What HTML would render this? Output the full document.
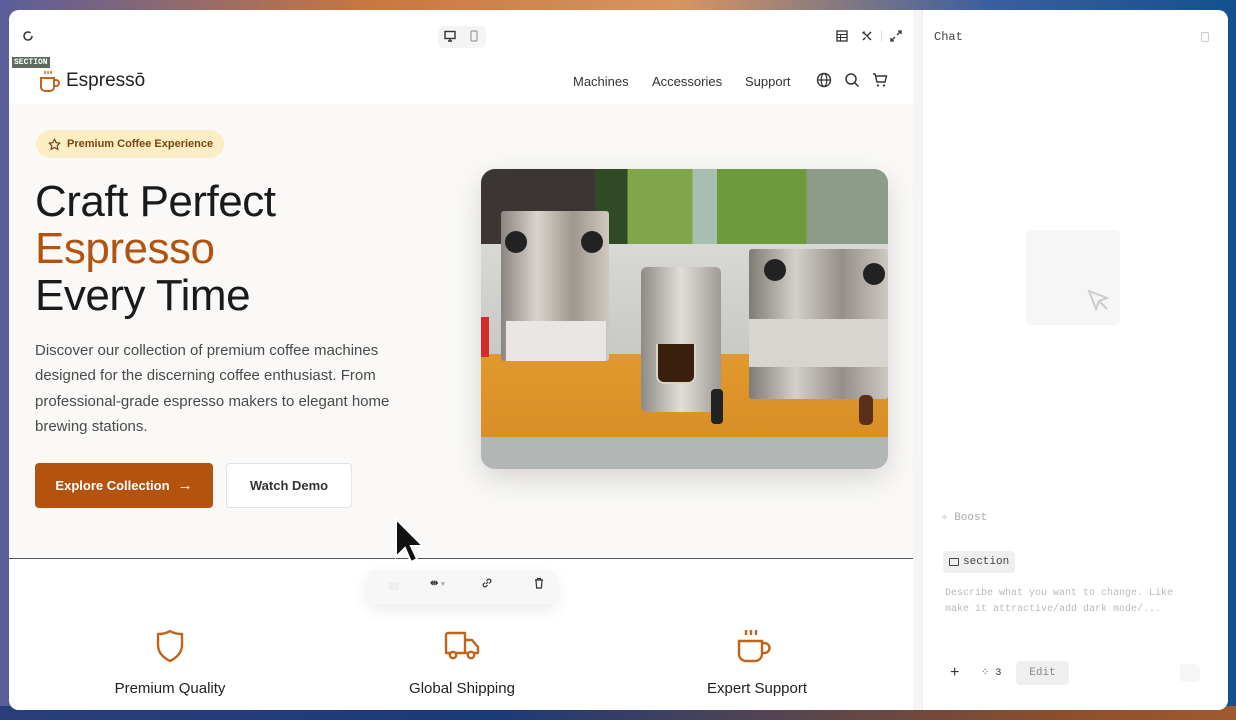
<!DOCTYPE html>
<html><head><meta charset="utf-8">
<style>
*{box-sizing:border-box;margin:0;padding:0}
html,body{width:1236px;height:720px;overflow:hidden}
body{font-family:"Liberation Sans",sans-serif;background:linear-gradient(90deg,#5a5d9a 0%,#c9773f 30%,#d69562 55%,#3a5fa0 80%,#14508f 100%);position:relative}
.bottombg{position:absolute;left:0;right:0;bottom:0;height:14px;background:linear-gradient(90deg,#2a3e7a 0%,#1c3a78 40%,#8a4e2c 85%,#a05a30 100%)}
.win{position:absolute;left:9px;top:10px;width:1219px;height:700px;background:#f6f5f3;border-radius:10px;overflow:hidden}
.left{position:absolute;left:0;top:0;width:904px;height:700px;background:#fff}
.right{position:absolute;left:913px;top:0;width:306px;height:700px;background:#fff;border-left:1px solid #eee}
.ic{position:absolute}
.nav a{position:absolute;top:64px;font-size:13px;color:#333}
.hero{position:absolute;left:0;top:94px;width:904px;height:454px;background:#faf9f7}
h1{position:absolute;left:26px;top:168px;font-weight:400;font-size:44px;line-height:47px;color:#1a1a1a;letter-spacing:-0.5px}
p.d{position:absolute;left:26px;top:328px;width:380px;font-size:15px;line-height:25.3px;color:#4a4a4a}
.btn1{position:absolute;left:26px;top:453px;width:178px;height:45px;background:#b4530e;border-radius:4px;color:#fff;font-size:13px;font-weight:700;display:flex;align-items:center;justify-content:center;gap:8px}
.btn2{position:absolute;left:217px;top:453px;width:126px;height:45px;background:#fff;border:1px solid #e2e2e2;border-radius:4px;color:#333;font-size:13px;font-weight:700;display:flex;align-items:center;justify-content:center}
.badge{position:absolute;left:27px;top:120px;width:188px;height:28px;background:#fbeec4;border-radius:14px;font-size:11px;color:#7a4410;font-weight:700;display:flex;align-items:center;padding-left:12px;gap:6px}
.photo{position:absolute;left:472px;top:159px;width:407px;height:300px;border-radius:14px;overflow:hidden;box-shadow:0 10px 30px rgba(0,0,0,.15);background:#c9c9c4}
.photo div{position:absolute}
.feat{position:absolute;top:670px;font-size:15px;color:#222;text-align:center;width:200px}
</style></head><body>
<div class="bottombg"></div>
<div class="win">
 <div class="left">
  <svg class="ic" style="left:12px;top:19px" width="14" height="14" viewBox="0 0 14 14"><path d="M11 7a4 4 0 1 1-1.5-3.1" fill="none" stroke="#333" stroke-width="1.5"/></svg>
  <div style="position:absolute;left:429px;top:16px;width:48px;height:22px;background:#f4f4f4;border-radius:5px"></div>
  <svg class="ic" style="left:435px;top:20px" width="12" height="12" viewBox="0 0 12 12"><rect x="1" y="1.5" width="10" height="7" fill="none" stroke="#333" stroke-width="1.4"/><path d="M4 11h4M6 8.5v2.5" stroke="#333" stroke-width="1.4"/></svg>
  <svg class="ic" style="left:460px;top:20px" width="10" height="12" viewBox="0 0 10 12"><rect x="2" y="1" width="6" height="10" rx="1" fill="none" stroke="#999" stroke-width="1.2"/></svg>
  <svg class="ic" style="left:827px;top:20px" width="12" height="12" viewBox="0 0 12 12"><rect x="1" y="1" width="10" height="10" fill="none" stroke="#333" stroke-width="1.3"/><path d="M1 4.5h10M1 7.5h10M4.5 4.5v6.5" stroke="#333" stroke-width="1.1"/></svg>
  <svg class="ic" style="left:852px;top:20px" width="12" height="12" viewBox="0 0 12 12"><path d="M2 2l8 8M10 2L6 6M2 10l2.5-2.5M1.5 3.5l2-2" stroke="#333" stroke-width="1.4" fill="none"/></svg>
  <div style="position:absolute;left:872px;top:20px;width:1px;height:12px;background:#ddd"></div>
  <svg class="ic" style="left:881px;top:20px" width="12" height="12" viewBox="0 0 12 12"><path d="M7 5l4-4M8 1h3v3M5 7l-4 4M1 8v3h3" stroke="#333" stroke-width="1.3" fill="none"/></svg>
  <div style="position:absolute;left:3px;top:47px;background:#5d6a5d;color:#fff;font-family:'Liberation Mono',monospace;font-size:8px;font-weight:700;padding:1px 2px">SECTION</div>
  <svg class="ic" style="left:28px;top:58px" width="24" height="26" viewBox="0 0 24 26"><path d="M4 10h13v9a4 4 0 0 1-4 4H8a4 4 0 0 1-4-4z" fill="none" stroke="#c0631d" stroke-width="2"/><path d="M17 12h2a3 3 0 0 1 0 6h-2" fill="none" stroke="#c0631d" stroke-width="2"/><path d="M8 3v3M11 3v3M14 3v3" stroke="#c0631d" stroke-width="1.4"/></svg>
  <div style="position:absolute;left:57px;top:60px;font-size:19px;color:#222">Espressō</div>
  <div class="nav"><a style="left:564px">Machines</a><a style="left:643px">Accessories</a><a style="left:736px">Support</a></div>
  <svg class="ic" style="left:807px;top:62px" width="16" height="16" viewBox="0 0 16 16"><circle cx="8" cy="8" r="6.5" fill="none" stroke="#333" stroke-width="1.4"/><ellipse cx="8" cy="8" rx="2.8" ry="6.5" fill="none" stroke="#333" stroke-width="1.2"/><path d="M1.5 8h13" stroke="#333" stroke-width="1.2"/></svg>
  <svg class="ic" style="left:835px;top:62px" width="16" height="16" viewBox="0 0 16 16"><circle cx="7" cy="7" r="5" fill="none" stroke="#333" stroke-width="1.5"/><path d="M11 11l3.5 3.5" stroke="#333" stroke-width="1.5"/></svg>
  <svg class="ic" style="left:863px;top:62px" width="16" height="16" viewBox="0 0 16 16"><path d="M1 2h2l2 8h8l1.5-6H4" fill="none" stroke="#333" stroke-width="1.4"/><circle cx="6" cy="13.5" r="1.1" fill="#333"/><circle cx="12" cy="13.5" r="1.1" fill="#333"/></svg>
  <div class="hero"></div>
  <div class="badge"><svg width="13" height="13" viewBox="0 0 24 24"><path d="M12 2l3 6.5 7 .8-5.2 4.8 1.5 7L12 17.5 5.7 21l1.5-7L2 9.3l7-.8z" fill="none" stroke="#7a4410" stroke-width="2.2" stroke-linejoin="round"/></svg>Premium Coffee Experience</div>
  <h1>Craft Perfect<br><span style="color:#b4530e">Espresso</span><br>Every Time</h1>
  <p class="d">Discover our collection of premium coffee machines designed for the discerning coffee enthusiast. From professional-grade espresso makers to elegant home brewing stations.</p>
  <div class="btn1">Explore Collection <span style="font-weight:400;font-size:15px">→</span></div>
  <div class="btn2">Watch Demo</div>
  <div class="photo">
   <div style="left:0;top:0;width:100%;height:80px;background:linear-gradient(90deg,#3b3633 0 28%,#2f4a25 28% 36%,#7fa64a 36% 52%,#a7bfb0 52% 58%,#6e9a3e 58% 80%,#8c9c88 80% 100%)"></div>
   <div style="left:0;top:75px;width:100%;height:120px;background:linear-gradient(#d8d8d4,#c6c8c6)"></div>
   <div style="left:0;top:185px;width:100%;height:95px;background:linear-gradient(#e0992f,#d88d25)"></div>
   <div style="left:0;top:268px;width:100%;height:32px;background:#b2b7b6"></div>
   <div style="left:20px;top:42px;width:108px;height:150px;background:linear-gradient(90deg,#8a8580,#d8d3cc,#9d978f,#cfc9c1);border-radius:3px"></div>
   <div style="left:25px;top:152px;width:100px;height:40px;background:#e9e6e3"></div>
   <div style="left:0;top:148px;width:8px;height:40px;background:#d42a2a"></div>
   <div style="left:160px;top:98px;width:80px;height:145px;background:linear-gradient(90deg,#8e8a86,#e2dfdb,#9e9993);border-radius:6px"></div>
   <div style="left:175px;top:175px;width:40px;height:40px;background:#3a200c;border-radius:0 0 8px 8px;border:2px solid #d9d3c8;border-top:none"></div>
   <div style="left:268px;top:80px;width:139px;height:150px;background:linear-gradient(90deg,#7e7a74,#d4d0ca,#948f88,#cdc8c1);border-radius:3px"></div>
   <div style="left:268px;top:150px;width:139px;height:48px;background:#d8d5d0"></div>
   <div style="left:24px;top:62px;width:22px;height:22px;background:#222;border-radius:50%"></div>
   <div style="left:100px;top:62px;width:22px;height:22px;background:#222;border-radius:50%"></div>
   <div style="left:283px;top:90px;width:22px;height:22px;background:#222;border-radius:50%"></div>
   <div style="left:382px;top:94px;width:22px;height:22px;background:#222;border-radius:50%"></div>
   <div style="left:230px;top:220px;width:12px;height:35px;background:#222;border-radius:4px"></div>
   <div style="left:378px;top:226px;width:14px;height:30px;background:#5a3018;border-radius:5px"></div>
  </div>
  <div style="position:absolute;left:0;top:548px;width:904px;height:1px;background:#555"></div>
  <div style="position:absolute;left:358px;top:560px;width:190px;height:34px;background:#f7f7f7;border-radius:8px;box-shadow:0 6px 16px rgba(0,0,0,.08)"></div>
  <div style="position:absolute;left:380px;top:572px;width:10px;height:8px;background:#eee"></div>
  <div style="position:absolute;left:421px;top:568px;font-size:10px;color:#333;font-weight:700">⇹ <span style="color:#aaa;font-size:7px">▾</span></div>
  <svg class="ic" style="left:472px;top:567px" width="12" height="12" viewBox="0 0 12 12"><path d="M5 7l2-2M4 5.5L2.5 7a1.8 1.8 0 0 0 2.5 2.5L6.5 8M8 6.5L9.5 5A1.8 1.8 0 0 0 7 2.5L5.5 4" stroke="#333" stroke-width="1.2" fill="none"/></svg>
  <svg class="ic" style="left:524px;top:567px" width="12" height="12" viewBox="0 0 12 12"><path d="M2 3h8M4.5 3V1.5h3V3M3 3l.6 8h4.8L9 3" stroke="#333" stroke-width="1.2" fill="none"/></svg>
  <svg class="ic" style="left:146px;top:619px" width="30" height="34" viewBox="0 0 30 34"><path d="M15 2c3 2 7 3 12 3v11c0 8-6 13-12 16C9 29 3 24 3 16V5c5 0 9-1 12-3z" fill="none" stroke="#c0631d" stroke-width="2.4" stroke-linejoin="round"/></svg>
  <svg class="ic" style="left:434px;top:621px" width="38" height="30" viewBox="0 0 38 30"><path d="M3 4a2 2 0 0 1 2-2h17v20H3z" fill="none" stroke="#c0631d" stroke-width="2.4" stroke-linejoin="round"/><path d="M22 9h7l6 7v6H22" fill="none" stroke="#c0631d" stroke-width="2.4" stroke-linejoin="round"/><circle cx="10" cy="24" r="3.2" fill="#fff" stroke="#c0631d" stroke-width="2.4"/><circle cx="28" cy="24" r="3.2" fill="#fff" stroke="#c0631d" stroke-width="2.4"/></svg>
  <svg class="ic" style="left:727px;top:618px" width="36" height="36" viewBox="0 0 36 36"><path d="M3 13h23v13a7 7 0 0 1-7 7H10a7 7 0 0 1-7-7z" fill="none" stroke="#c0631d" stroke-width="2.4"/><path d="M26 15h2.5a5 5 0 0 1 0 10H26" fill="none" stroke="#c0631d" stroke-width="2.4"/><path d="M10 2v5M15 2v5M20 2v5" stroke="#c0631d" stroke-width="2.4"/></svg>
  <div class="feat" style="left:61px">Premium Quality</div>
  <div class="feat" style="left:353px">Global Shipping</div>
  <div class="feat" style="left:648px">Expert Support</div>
  <svg class="ic" style="left:384px;top:507px" width="30" height="50" viewBox="0 0 30 50"><path d="M3 2v38l9-9 6 14 6-3-6-13h12z" fill="#111" stroke="#fff" stroke-width="2"/></svg>
 </div>
 <div class="right">
  <div style="position:absolute;left:11px;top:20px;font-family:'Liberation Mono',monospace;font-size:12px;color:#444">Chat</div>
  <div style="position:absolute;left:278px;top:22px;width:8px;height:10px;border:1px solid #ccc;border-radius:2px"></div>
  <div style="position:absolute;left:103px;top:220px;width:94px;height:95px;background:#f6f6f6;border-radius:4px"></div>
  <svg class="ic" style="left:163px;top:278px" width="26" height="26" viewBox="0 0 26 26"><path d="M3 3l18 7-8 3-3 8z M13 13l8 8" fill="none" stroke="#ccc" stroke-width="2"/></svg>
  <div style="position:absolute;left:18px;top:500px;font-family:'Liberation Mono',monospace;font-size:11px;color:#aaa">✧ Boost</div>
  <div style="position:absolute;left:20px;top:541px;width:72px;height:22px;background:#efefef;border-radius:4px;font-family:'Liberation Mono',monospace;font-size:11px;color:#444;display:flex;align-items:center;padding-left:6px;gap:4px"><span style="display:inline-block;width:10px;height:8px;border:1.5px solid #444;border-radius:1px"></span>section</div>
  <div style="position:absolute;left:22px;top:576px;width:250px;font-family:'Liberation Mono',monospace;font-size:10px;line-height:16px;color:#bbb">Describe what you want to change. Like make it attractive/add dark mode/...</div>
  <div style="position:absolute;left:27px;top:654px;font-size:16px;color:#333">+</div>
  <div style="position:absolute;left:58px;top:657px;font-family:'Liberation Mono',monospace;font-size:10px;color:#333">⁘ 3</div>
  <div style="position:absolute;left:93px;top:651px;width:53px;height:24px;background:#efefef;border-radius:4px;font-family:'Liberation Mono',monospace;font-size:11px;color:#888;display:flex;align-items:center;justify-content:center">Edit</div>
  <div style="position:absolute;left:257px;top:654px;width:20px;height:18px;background:#f6f6f6;border-radius:4px"></div>
 </div>
</div>
</body></html>
